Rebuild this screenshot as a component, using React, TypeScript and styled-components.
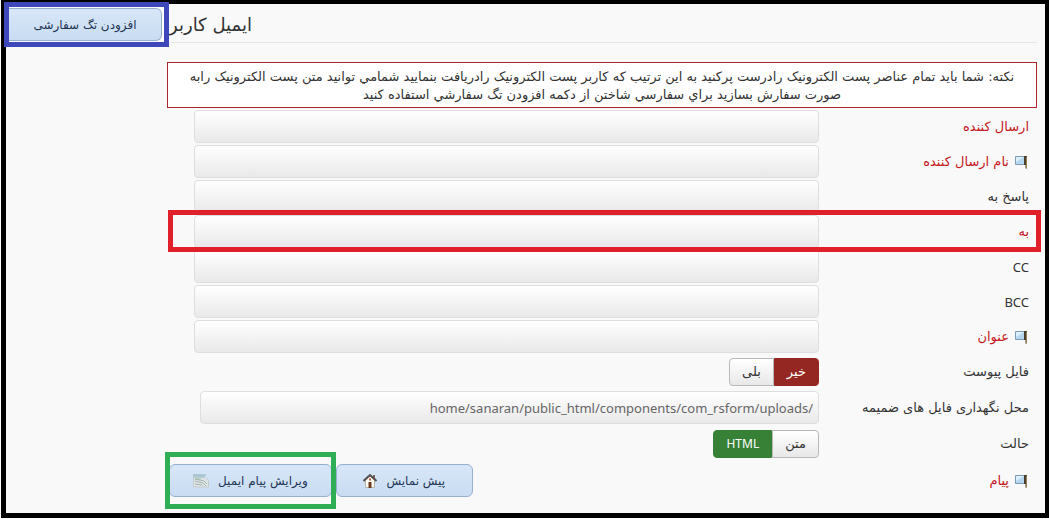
import React from "react";
import styled, { createGlobalStyle, css } from "styled-components";

const GlobalStyle = createGlobalStyle`
  * { box-sizing: border-box; }
  body {
    margin: 0;
    background: #fff;
    color: #333;
    font-family: "DejaVu Sans", sans-serif;
    font-size: 13px;
    line-height: 18px;
  }
`;

const Frame = styled.main`
  margin: 0 0 1px 1px;
  border: solid #000;
  border-width: 4px 4px 5px 5px;
  background: #f9f9f9;
  padding: 4px 8px 16px 0;
`;

const Header = styled.header`
  display: flex;
  align-items: flex-start;
  margin-bottom: 19px;
`;

const Title = styled.h1`
  flex: 1;
  margin: 0;
  height: 35px;
  border-bottom: 1px solid #e5e5e5;
  text-align: left;
  font-size: 18px;
  font-weight: 400;
  line-height: 34px;
`;

const Mark = styled.span<{ $color: string; $inset: string }>`
  position: absolute;
  z-index: 1;
  inset: ${(p) => p.$inset};
  border: 5px solid ${(p) => p.$color};
  pointer-events: none;
`;

const Marked = styled.div`
  position: relative;
`;

const TagSlot = styled(Marked)`
  width: 163px;
  padding: 0 7px 0 3px;
  background: #fff;
`;

const BlueButton = styled.button<{ $open?: boolean }>`
  display: flex;
  align-items: center;
  justify-content: center;
  gap: 9px;
  min-width: 137px;
  height: 33px;
  padding: 0 23px;
  border: 1px solid #98b0d0;
  border-radius: 6px;
  background: linear-gradient(#d8e7f8, #c9dcf2);
  color: #1f3556;
  font: inherit;
  font-size: 12px;
  white-space: nowrap;
  ${(p) =>
    p.$open &&
    css`
      width: 100%;
      border-left: 0;
      border-radius: 0 6px 6px 0;
    `}
`;

const Body = styled.div`
  margin-left: 161px;
`;

const Note = styled.p`
  margin: 0 0 2px;
  padding: 5px 8px 3px;
  border: 1px solid #a8262e;
  background: #fff;
  text-align: center;
`;

const Form = styled.form`
  display: flex;
  flex-direction: column;
  gap: 2px;
`;

const Row = styled.div<{ $space?: number }>`
  position: relative;
  display: flex;
  align-items: center;
  min-height: 33px;
  margin-top: ${(p) => p.$space ?? 0}px;
`;

const Name = styled.div<{ $required?: boolean; $latin?: boolean }>`
  flex: 0 0 218px;
  display: flex;
  align-items: center;
  gap: 6px;
  padding-right: 8px;
  color: ${(p) => (p.$required ? "#c4161c" : "#333")};
  ${(p) => p.$latin && css`font-family: "Noto Sans", sans-serif;`}
`;

const Field = styled.div<{ $narrow?: boolean }>`
  flex: 1;
  display: flex;
  padding-left: ${(p) => (p.$narrow ? 33 : 27)}px;
`;

const TextBox = styled.input`
  flex: 1;
  min-width: 0;
  height: 33px;
  padding: 0 5px;
  border: 1px solid #dedede;
  border-radius: 4px;
  background: linear-gradient(#fff, #e9e9e9);
  color: #666;
  font-family: "Noto Sans", sans-serif;
  font-size: 13px;
  text-align: right;
`;

const Group = styled.div`
  display: flex;
  height: 28px;
`;

const Choice = styled.label<{ $fill?: string; $latin?: boolean }>`
  position: relative;
  display: flex;
  align-items: center;
  padding: 0 12px;
  border: 1px solid #b8b8b8;
  background: linear-gradient(#fff, #e8e8e8);
  &:first-child { border-radius: 0 4px 4px 0; }
  &:last-child { border-radius: 4px 0 0 4px; }
  ${(p) =>
    p.$latin &&
    css`
      font-family: "Noto Sans", sans-serif;
      font-size: 12px;
    `}
  ${(p) =>
    p.$fill &&
    css`
      border-color: ${p.$fill};
      background: ${p.$fill};
      color: #fff;
    `}
  input {
    position: absolute;
    inset: 0;
    margin: 0;
    opacity: 0;
  }
`;

const Actions = styled.div`
  flex: 1;
  display: flex;
  justify-content: flex-end;
  gap: 4px;
  padding-left: 2px;
`;

const FlagIcon = () => (
  <svg width="14" height="14" viewBox="0 0 14 14" aria-hidden="true">
    <path d="M.5 1.500h10v8h-10z" fill="#b4d6ef" stroke="#7d9cb3" />
    <path d="M1 2h8L1 7z" fill="#dceffb" />
    <path d="M9 1h3v12.500h-1.500V10H9z" fill="#4d3f2d" />
    <path d="M11 2h1v11h-1z" fill="#9b8257" />
  </svg>
);

const HouseIcon = () => (
  <svg width="14" height="16" viewBox="0 0 14 16" aria-hidden="true">
    <path d="M2.500 7L7 3l4.500 4v7.500h-9z" fill="#fdfaf3" stroke="#b9b3aa" />
    <path d="M10 2h2v4h-2z" fill="#77665e" />
    <path d="M.5 8L7 2l6.500 6" fill="none" stroke="#55504f" strokeWidth="2" />
    <path d="M5.500 9h3v6h-3z" fill="#6d3b22" />
    <path d="M6 5.500h2v2H6z" fill="#b5523a" />
  </svg>
);

const PaperIcon = () => (
  <svg width="16" height="14" viewBox="0 0 16 14" aria-hidden="true">
    <path d="M.5 1.500H10l5.500 5V13H.5z" fill="#dde4e6" stroke="#c3cacb" />
    <path d="M0 1h13M1 3h10" stroke="#86b4c3" />
    <path d="M2 5l9 2 3 3M2 7l8 2 3 3M2 10l7 1" fill="none" stroke="#a9b3b0" />
    <path d="M2 5h6" stroke="#9dbf9f" />
  </svg>
);

type FieldRow = {
  id: string;
  label: string;
  required?: boolean;
  flag?: boolean;
  marked?: boolean;
  latin?: boolean;
};

const fields: FieldRow[] = [
  { id: "from", label: "ارسال کننده", required: true },
  { id: "fromName", label: "نام ارسال کننده", required: true, flag: true },
  { id: "replyTo", label: "پاسخ به" },
  { id: "to", label: "به", required: true, marked: true },
  { id: "cc", label: "CC", latin: true },
  { id: "bcc", label: "BCC", latin: true },
  { id: "subject", label: "عنوان", required: true, flag: true },
];

export default function App() {
  return (
    <Frame dir="rtl" lang="fa">
      <GlobalStyle />
      <Header>
        <Title>ایمیل کاربر</Title>
        <TagSlot>
          <BlueButton type="button" $open>افزودن تگ سفارشی</BlueButton>
          <Mark $color="#3f48bb" $inset="-6px 0 -6px -2px" />
        </TagSlot>
      </Header>
      <Body>
        <Note>
          نکته: شما باید تمام عناصر پست الکترونیک رادرست پرکنید به این ترتیب که کاربر پست الکترونیک رادریافت بنمایید شمامي توانید متن پست الکترونیک رابه
          <br />
          صورت سفارش بسازید براي سفارسي شاختن از دکمه افزودن تگ سفارشي استفاده کنید
        </Note>
        <Form>
          {fields.map((f) => (
            <Row key={f.id}>
              <Name $required={f.required} $latin={f.latin}>
                {f.flag && <FlagIcon />}
                <label htmlFor={f.id}>{f.label}</label>
              </Name>
              <Field>
                <TextBox id={f.id} type="text" />
              </Field>
              {f.marked && <Mark $color="#e0202a" $inset="-5px -4px -4px 1px" />}
            </Row>
          ))}
          <Row>
            <Name id="attach">فایل پیوست</Name>
            <Field>
              <Group role="radiogroup" aria-labelledby="attach">
                <Choice $fill="#942722"><input type="radio" name="attach" defaultChecked />خیر</Choice>
                <Choice><input type="radio" name="attach" />بلی</Choice>
              </Group>
            </Field>
          </Row>
          <Row $space={1}>
            <Name><label htmlFor="path">محل نگهداری فایل های ضمیمه</label></Name>
            <Field $narrow>
              <TextBox id="path" type="text" dir="ltr" defaultValue="home/sanaran/public_html/components/com_rsform/uploads/" />
            </Field>
          </Row>
          <Row $space={1}>
            <Name id="mode">حالت</Name>
            <Field>
              <Group role="radiogroup" aria-labelledby="mode">
                <Choice><input type="radio" name="mode" />متن</Choice>
                <Choice $fill="#378137" $latin><input type="radio" name="mode" defaultChecked />HTML</Choice>
              </Group>
            </Field>
          </Row>
          <Row $space={2}>
            <Name $required><FlagIcon />پیام</Name>
            <Actions>
              <BlueButton type="button">پیش نمایش<HouseIcon /></BlueButton>
              <Marked>
                <BlueButton type="button">ویرایش پیام ایمیل<PaperIcon /></BlueButton>
                <Mark $color="#2fae55" $inset="-12px -4px -12px -4px" />
              </Marked>
            </Actions>
          </Row>
        </Form>
      </Body>
    </Frame>
  );
}
